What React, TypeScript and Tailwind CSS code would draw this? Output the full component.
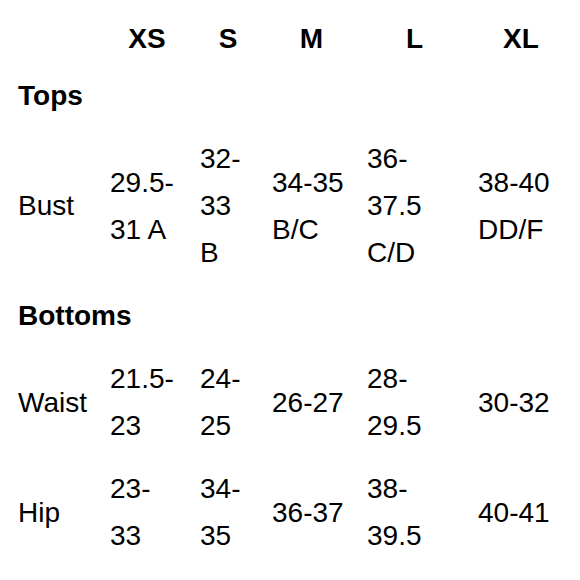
import React from 'react';

type Row = { label: string; cells: string[][] };

const sizes = ['XS', 'S', 'M', 'L', 'XL'];

const sections: { title: string; rows: Row[] }[] = [
  {
    title: 'Tops',
    rows: [
      {
        label: 'Bust',
        cells: [['29.5-', '31 A'], ['32-', '33', 'B'], ['34-35', 'B/C'], ['36-', '37.5', 'C/D'], ['38-40', 'DD/F']],
      },
    ],
  },
  {
    title: 'Bottoms',
    rows: [
      {
        label: 'Waist',
        cells: [['21.5-', '23'], ['24-', '25'], ['26-27'], ['28-', '29.5'], ['30-32']],
      },
      {
        label: 'Hip',
        cells: [['23-', '33'], ['34-', '35'], ['36-37'], ['38-', '39.5'], ['40-41']],
      },
    ],
  },
];

const cols = 'grid grid-cols-[92px_90px_72px_95px_111px_102px]';

export default function App() {
  return (
    <div className="w-[580px] h-[580px] bg-white text-black overflow-hidden pl-[13px] pt-[15px] font-['Liberation_Sans',Arial,sans-serif] text-[28px] leading-[47px]">
      <div className={cols}>
        <div />
        {sizes.map((s) => (
          <div key={s} className="text-center font-bold pr-[6px]">
            {s}
          </div>
        ))}
      </div>

      {sections.map((sec, i) => (
        <div key={sec.title}>
          <div className={`pl-[5px] font-bold ${i === 0 ? 'mt-[10px]' : 'mt-[16px]'}`}>{sec.title}</div>
          {sec.rows.map((row) => (
            <div key={row.label} className={`${cols} items-center mt-[16px]`}>
              <div className="pl-[5px]">{row.label}</div>
              {row.cells.map((lines, idx) => (
                <div key={idx} className="pl-[5px] flex flex-col">
                  {lines.map((l, j) => (
                    <span key={j} className="whitespace-nowrap">
                      {l}
                    </span>
                  ))}
                </div>
              ))}
            </div>
          ))}
        </div>
      ))}
    </div>
  );
}
